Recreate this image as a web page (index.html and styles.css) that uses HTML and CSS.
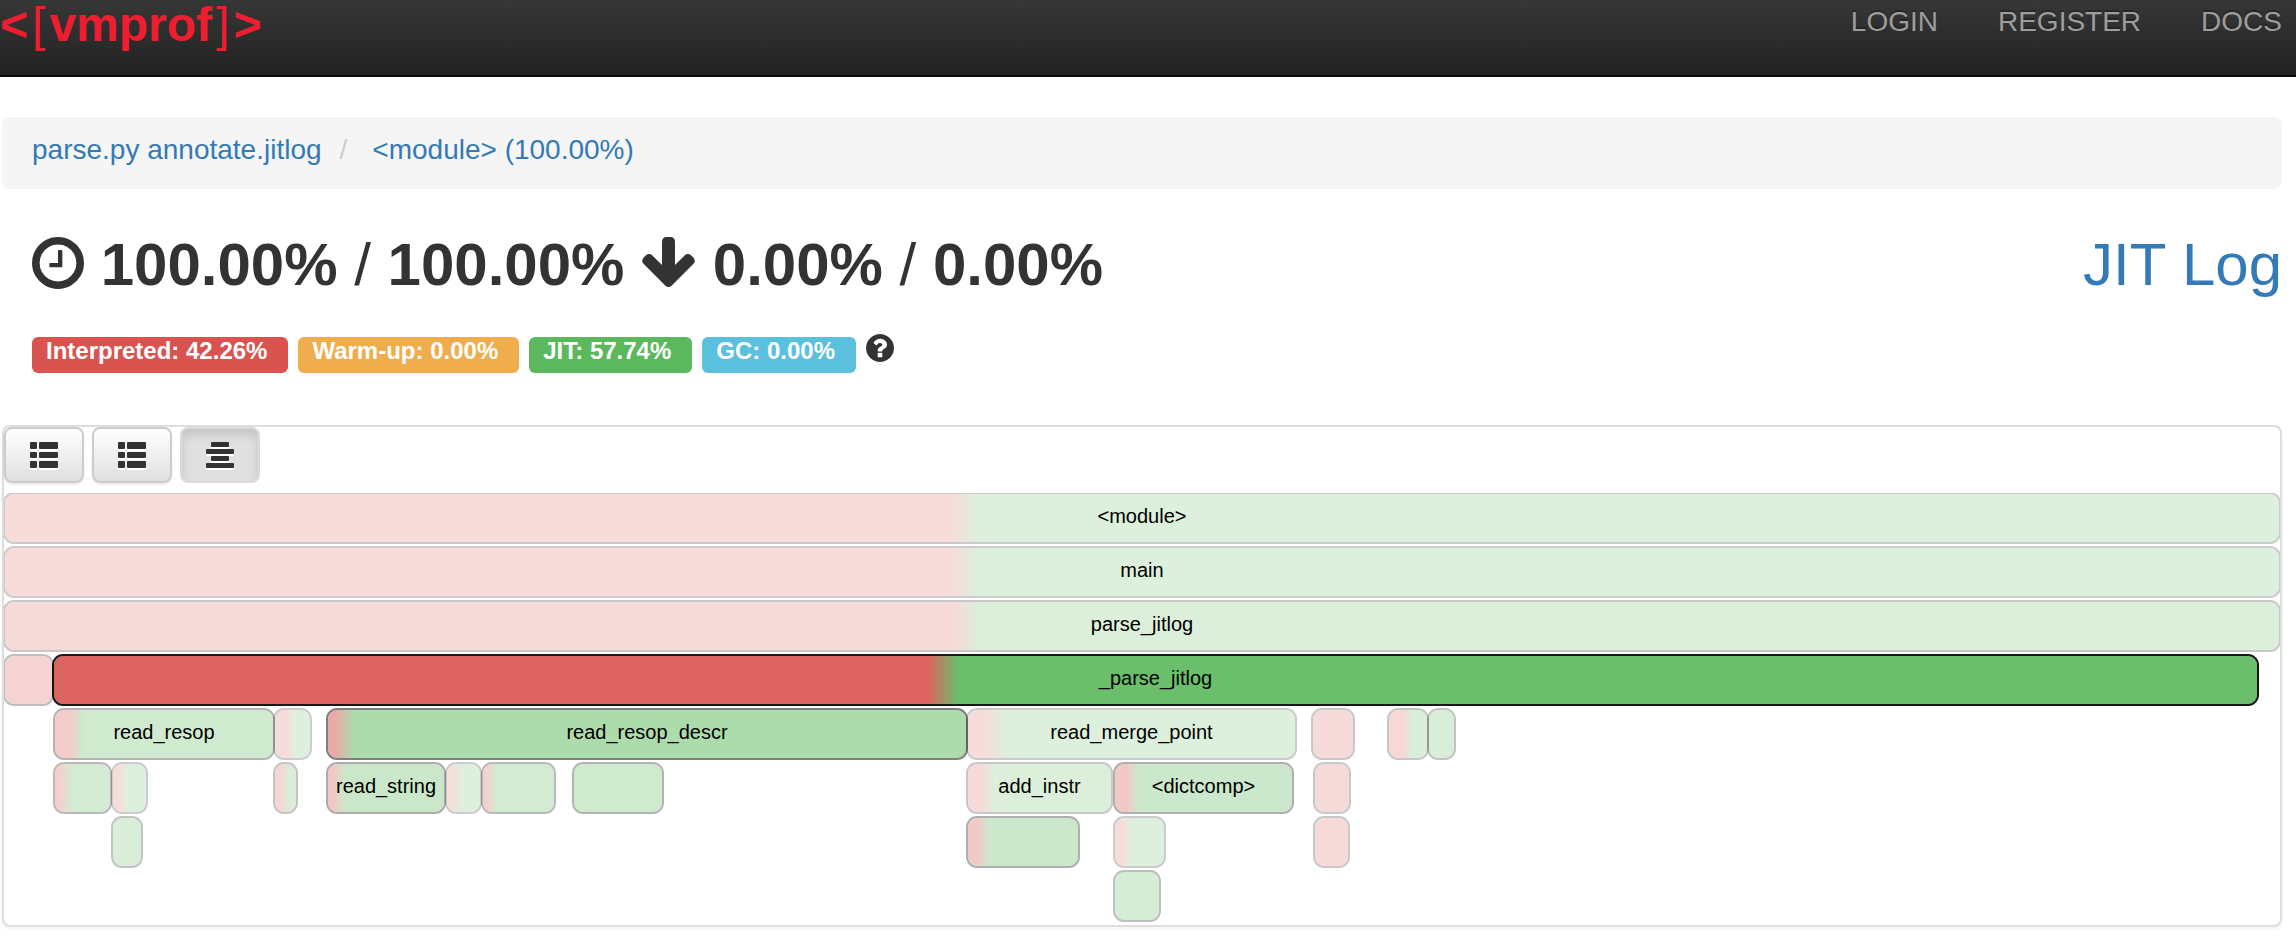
FILE: index.html
```html
<!DOCTYPE html>
<html lang="en">
<head>
<meta charset="utf-8">
<meta name="viewport" content="width=device-width, initial-scale=1">
<title>vmprof</title>
<link rel="stylesheet" href="styles.css">
</head>
<body>
<header class="navbar">
  <a class="logo" href="#" aria-label="vmprof"><span>&lt;</span><span class="logo-bracket">[</span><span>vmprof</span><span class="logo-bracket">]</span><span>&gt;</span></a>
  <nav class="nav-links">
    <a href="#">LOGIN</a>
    <a href="#">REGISTER</a>
    <a href="#">DOCS</a>
  </nav>
</header>

<main class="page">
  <ol class="breadcrumb">
    <li><a href="#">parse.py annotate.jitlog</a></li>
    <li><a href="#">&lt;module&gt; (100.00%)</a></li>
  </ol>

  <div class="summary">
    <h1 class="totals">
      <svg class="icon-clock" viewBox="128 128 1536 1536" aria-hidden="true"><path d="M1024 544v448q0 14-9 23t-23 9h-320q-14 0-23-9t-9-23v-64q0-14 9-23t23-9h224v-352q0-14 9-23t23-9h64q14 0 23 9t9 23zm416 352q0-148-73-273t-198-198-273-73-273 73-198 198-73 273 73 273 198 198 273 73 273-73 198-198 73-273zm224 0q0 209-103 385.500t-279.500 279.500-385.500 103-385.500-103-279.500-279.500-103-385.500 103-385.500 279.500-279.500 385.500-103 385.500 103 279.500 279.500 103 385.500z"/></svg>
      <b>100.00%</b> / <b>100.00%</b>
      <svg class="icon-down" viewBox="117 128 1558 1483" aria-hidden="true"><path d="M1675 832q0 53-37 90l-651 652q-39 37-91 37-53 0-90-37l-651-652q-38-36-38-90 0-53 38-91l74-75q39-37 91-37 53 0 90 37l294 294v-704q0-52 38-90t90-38h128q52 0 90 38t38 90v704l294-294q37-37 90-37 52 0 91 37l75 75q37 39 37 91z"/></svg>
      <b>0.00%</b> / <b>0.00%</b>
    </h1>
    <a class="jit-link" href="#">JIT Log</a>
  </div>

  <div class="labels">
    <span class="label label-danger">Interpreted: 42.26%</span>
    <span class="label label-warning">Warm-up: 0.00%</span>
    <span class="label label-success">JIT: 57.74%</span>
    <span class="label label-info">GC: 0.00%</span>
    <button class="help" type="button" aria-label="Help">
      <svg viewBox="128 128 1536 1536" aria-hidden="true"><path d="M1024 1376v-192q0-14-9-23t-23-9h-192q-14 0-23 9t-9 23v192q0 14 9 23t23 9h192q14 0 23-9t9-23zm256-672q0-88-55.500-163t-138.500-116-170-41q-243 0-371 213-15 24 8 42l132 100q7 6 19 6 16 0 25-12 53-68 86-92 34-24 86-24 48 0 85.500 26t37.500 59q0 38-20 61t-68 45q-63 28-115.500 86.500t-52.500 125.500v36q0 14 9 23t23 9h192q14 0 23-9t9-23q0-19 21.500-49.500t54.500-49.500q32-18 49-28.500t46-35 44.500-48 28-60.500 12.500-81zm384 192q0 209-103 385.500t-279.500 279.500-385.500 103-385.500-103-279.500-279.500-103-385.500 103-385.500 279.500-279.500 385.500-103 385.500 103 279.500 279.500 103 385.500z"/></svg>
    </button>
  </div>

  <section class="panel">
    <div class="toolbar">
      <button class="btn" type="button" aria-label="List view">
        <svg viewBox="0 0 28 28" aria-hidden="true"><path d="M1 1h5q1 0 1 1v5q0 1-1 1h-5q-1 0-1-1v-5q0-1 1-1zM10 1h17q1 0 1 1v5q0 1-1 1h-17q-1 0-1-1v-5q0-1 1-1zM1 11h5q1 0 1 1v4q0 1-1 1h-5q-1 0-1-1v-4q0-1 1-1zM10 11h17q1 0 1 1v4q0 1-1 1h-17q-1 0-1-1v-4q0-1 1-1zM1 20h5q1 0 1 1v5q0 1-1 1h-5q-1 0-1-1v-5q0-1 1-1zM10 20h17q1 0 1 1v5q0 1-1 1h-17q-1 0-1-1v-5q0-1 1-1z"/></svg>
      </button>
      <button class="btn" type="button" aria-label="Table view">
        <svg viewBox="0 0 28 28" aria-hidden="true"><path d="M1 1h5q1 0 1 1v5q0 1-1 1h-5q-1 0-1-1v-5q0-1 1-1zM10 1h17q1 0 1 1v5q0 1-1 1h-17q-1 0-1-1v-5q0-1 1-1zM1 11h5q1 0 1 1v4q0 1-1 1h-5q-1 0-1-1v-4q0-1 1-1zM10 11h17q1 0 1 1v4q0 1-1 1h-17q-1 0-1-1v-4q0-1 1-1zM1 20h5q1 0 1 1v5q0 1-1 1h-5q-1 0-1-1v-5q0-1 1-1zM10 20h17q1 0 1 1v5q0 1-1 1h-17q-1 0-1-1v-5q0-1 1-1z"/></svg>
      </button>
      <button class="btn btn-active" type="button" aria-label="Flame graph" aria-pressed="true">
        <svg viewBox="0 0 28 28" aria-hidden="true"><rect x="5" y="1" width="18" height="5" rx="1"/><rect x="0" y="8" width="28" height="5" rx="1"/><rect x="5" y="15" width="18" height="5" rx="1"/><rect x="0" y="22" width="28" height="5" rx="1"/></svg>
      </button>
    </div>

    <div class="flames">
      <div class="level">
        <div class="frame" style="--x:0;--w:2276;--heat:.2;--red:41.7%;--green:42.8%">&lt;module&gt;</div>
      </div>
      <div class="level">
        <div class="frame" style="--x:0;--w:2276;--heat:.2;--red:41.7%;--green:42.8%">main</div>
      </div>
      <div class="level">
        <div class="frame" style="--x:0;--w:2276;--heat:.21;--red:41.7%;--green:42.8%">parse_jitlog</div>
      </div>
      <div class="level">
        <div class="frame" style="--x:0;--w:49;--heat:.25;--red:100%;--green:100%"></div>
        <div class="frame" style="--x:49;--w:2205;--heat:.9;--red:39.7%;--green:41%">_parse_jitlog</div>
      </div>
      <div class="level">
        <div class="frame" style="--x:50;--w:220;--heat:.29;--red:7%;--green:13%">read_resop</div>
        <div class="frame" style="--x:270;--w:37;--heat:.2;--red:30%;--green:62%"></div>
        <div class="frame" style="--x:323;--w:640;--heat:.5;--red:1%;--green:4%">read_resop_descr</div>
        <div class="frame" style="--x:963;--w:329;--heat:.2;--red:5%;--green:12%">read_merge_point</div>
        <div class="frame" style="--x:1308;--w:42;--heat:.21;--red:100%;--green:100%"></div>
        <div class="frame" style="--x:1384;--w:40;--heat:.22;--red:38%;--green:60%"></div>
        <div class="frame" style="--x:1424;--w:27;--heat:.23;--red:0%;--green:0%"></div>
      </div>
      <div class="level">
        <div class="frame" style="--x:50;--w:57;--heat:.27;--red:8%;--green:32%"></div>
        <div class="frame" style="--x:108;--w:35;--heat:.2;--red:10%;--green:50%"></div>
        <div class="frame" style="--x:270;--w:23;--heat:.23;--red:25%;--green:75%"></div>
        <div class="frame" style="--x:323;--w:118;--heat:.32;--red:4%;--green:15%">read_string</div>
        <div class="frame" style="--x:442;--w:35;--heat:.2;--red:8%;--green:50%"></div>
        <div class="frame" style="--x:478;--w:73;--heat:.27;--red:4%;--green:20%"></div>
        <div class="frame" style="--x:569;--w:90;--heat:.29;--red:0%;--green:0%"></div>
        <div class="frame" style="--x:963;--w:145;--heat:.21;--red:8%;--green:19%">add_instr</div>
        <div class="frame" style="--x:1110;--w:179;--heat:.31;--red:6%;--green:14%">&lt;dictcomp&gt;</div>
        <div class="frame" style="--x:1310;--w:36;--heat:.21;--red:100%;--green:100%"></div>
      </div>
      <div class="level">
        <div class="frame" style="--x:108;--w:30;--heat:.23;--red:0%;--green:0%"></div>
        <div class="frame" style="--x:963;--w:112;--heat:.31;--red:8%;--green:20%"></div>
        <div class="frame" style="--x:1110;--w:51;--heat:.2;--red:12%;--green:36%"></div>
        <div class="frame" style="--x:1310;--w:35;--heat:.21;--red:100%;--green:100%"></div>
      </div>
      <div class="level">
        <div class="frame" style="--x:1110;--w:46;--heat:.25;--red:0%;--green:0%"></div>
      </div>
    </div>
  </section>
</main>
</body>
</html>
```
FILE: styles.css
```css
* { box-sizing: border-box; }

body {
  margin: 0;
  background: #fff;
  color: #333;
  font-family: "Liberation Sans", Arial, sans-serif;
  font-size: 28px;
  line-height: 40px;
}

a { color: #337ab7; text-decoration: none; }
svg { display: block; fill: currentColor; }

.navbar {
  display: flex;
  justify-content: space-between;
  align-items: flex-start;
  height: 77px;
  padding-right: 14px;
  border-bottom: 2px solid #080808;
  background: linear-gradient(#373737, #222);
}

.logo {
  display: flex;
  gap: 4px;
  color: #ee1d2f;
  font-size: 48px;
  font-weight: bold;
  line-height: 50px;
}
.logo-bracket { font-weight: normal; }

.nav-links { display: flex; gap: 60px; padding-top: 2px; }
.nav-links a {
  color: #9d9d9d;
  text-shadow: 0 -2px 0 rgba(0, 0, 0, .25);
}

.page { padding: 40px 14px 16px 2px; }

.breadcrumb {
  display: flex;
  margin: 0;
  padding: 13px 30px 19px;
  border-radius: 8px;
  background: #f5f5f5;
  list-style: none;
}
.breadcrumb li + li::before {
  content: "/";
  padding: 0 25px 0 18px;
  color: #ccc;
}

.summary {
  display: flex;
  justify-content: space-between;
  align-items: baseline;
  margin-top: 43px;
  padding-left: 30px;
  font-size: 60px;
  line-height: 66px;
}
.totals { margin: 0; font-size: 60px; font-weight: normal; }
.totals svg { display: inline-block; }
.icon-clock { width: 52px; height: 52px; vertical-align: -4px; }
.icon-down { width: 55px; height: 50px; vertical-align: -2px; }

.labels {
  display: flex;
  align-items: flex-start;
  gap: 10px;
  margin-top: 39px;
  padding-left: 30px;
}
.label {
  padding: 0 21px 8px 14px;
  border-radius: 6px;
  color: #fff;
  font-size: 24px;
  font-weight: bold;
  line-height: 28px;
}
.label-danger { background: #d9534f; }
.label-warning { background: #f0ad4e; }
.label-success { background: #5cb85c; }
.label-info { background: #5bc0de; }

.help {
  width: 28px;
  margin-top: -3px;
  padding: 0;
  border: 0;
  background: none;
  color: #333;
}

.panel {
  margin-top: 52px;
  border: 2px solid #ddd;
  border-radius: 8px;
  box-shadow: 0 2px 4px rgba(0, 0, 0, .05);
}

.toolbar { display: flex; gap: 8px; padding-bottom: 10px; }
.btn {
  display: grid;
  place-items: center;
  width: 80px;
  height: 56px;
  padding: 0;
  border: 2px solid #ccc;
  border-radius: 8px;
  background: linear-gradient(#fff, #e0e0e0);
  box-shadow: inset 0 2px 0 rgba(255, 255, 255, .15), 0 2px 2px rgba(0, 0, 0, .075);
  color: #333;
}
.btn svg { width: 28px; height: 28px; filter: drop-shadow(0 2px 0 #fff); }
.btn-active {
  border-color: #dbdbdb;
  background: #e0e0e0;
  box-shadow: inset 0 6px 10px rgba(0, 0, 0, .125);
}

/* Call stack levels; --x and --w are in units of 1/2276 of the full width. */
.flames { overflow: hidden; color: #000; font-size: 20px; line-height: 48px; }
.level { display: grid; height: 54px; }
.frame {
  position: relative;
  z-index: 0;
  grid-area: 1 / 1;
  width: calc(var(--w) * 100% / 2276 + 2px);
  height: 52px;
  margin-top: -1px;
  margin-left: calc(var(--x) * 100% / 2276 - 1px);
  text-align: center;
  white-space: nowrap;
}
.frame::before {
  content: "";
  position: absolute;
  inset: 0;
  z-index: -1;
  border: 2px solid #000;
  border-radius: 11px;
  background: linear-gradient(to right, #d9534f var(--red), #5cb85c var(--green)) padding-box;
  opacity: var(--heat);
}
```
